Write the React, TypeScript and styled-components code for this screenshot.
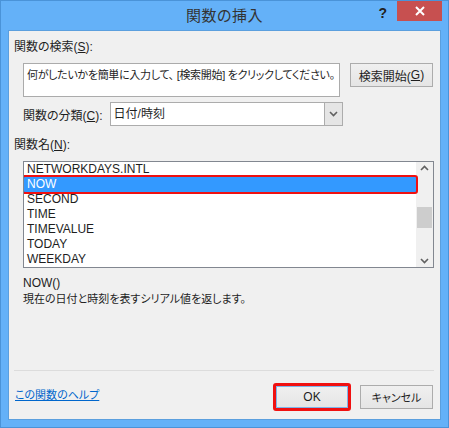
import styled, { createGlobalStyle } from "styled-components";

const GlobalStyle = createGlobalStyle`
    html, body {
        margin: 0;
        padding: 0;
        background: #ffffff;
    }
    body {
        font-family: "Liberation Sans", "Noto Sans CJK JP", sans-serif;
        font-feature-settings: "palt";
    }
`;

const Window = styled.div`
    width: 449px;
    height: 428px;
    box-sizing: border-box;
    background-color: #64b1f8;
    border: 1px solid #4a93d8;
    display: flex;
    flex-direction: column;
`;

const TitleBar = styled.div`
    height: 29px;
    display: grid;
    grid-template-columns: 1fr auto 1fr;
    align-items: start;
`;

const Title = styled.div`
    grid-column: 2;
    font-size: 15px;
    color: #333;
    line-height: 29px;
    letter-spacing: 0.5px;
`;

const Controls = styled.div`
    grid-column: 3;
    justify-self: end;
    display: flex;
    align-items: flex-start;
    margin-right: 6px;
`;

const HelpMark = styled.span`
    font-family: "Liberation Sans", sans-serif;
    font-weight: bold;
    font-size: 14px;
    color: #222;
    margin-top: 4px;
    margin-right: 10px;
`;

const CloseButton = styled.div`
    width: 45px;
    height: 20px;
    background-color: #c75050;
    display: flex;
    align-items: center;
    justify-content: center;
`;

const Client = styled.div`
    margin: 0 7px 7px 7px;
    flex: 1;
    background-color: #f0f0f0;
    border: 1px solid #5b9fde;
    display: flex;
    flex-direction: column;
    padding: 0 6px 0 5px;
    font-size: 12px;
    color: #1e1e1e;
`;

const Label = styled.div<{ $top: number; $indent?: boolean; $size?: number }>`
    margin-top: ${(p) => p.$top}px;
    margin-left: ${(p) => (p.$indent ? 9 : 0)}px;
    font-size: ${(p) => p.$size ?? 12}px;
    height: 14px;
    line-height: 14px;
    white-space: nowrap;
`;

const Key = styled.span`
    text-decoration: underline;
`;

const Indented = styled.div<{ $top: number }>`
    margin-left: 9px;
    margin-top: ${(p) => p.$top}px;
`;

const SearchRow = styled.div`
    display: flex;
    align-items: flex-start;
    gap: 10px;
`;

const SearchBox = styled.div`
    width: 317px;
    height: 34px;
    box-sizing: border-box;
    background: #fff;
    border: 1px solid #ababab;
    padding: 4px 3px;
    font-size: 11px;
    letter-spacing: -0.3px;
    line-height: 14px;
    white-space: nowrap;
    overflow: hidden;
`;

const Button = styled.div<{ $width: number; $focus?: boolean; $size?: number }>`
    width: ${(p) => p.$width}px;
    height: 24px;
    box-sizing: border-box;
    border: 1px solid ${(p) => (p.$focus ? "#3c7fb1" : "#acacac")};
    background: linear-gradient(#f0f0f0, #e5e5e5);
    font-size: ${(p) => p.$size ?? 12}px;
    display: flex;
    align-items: center;
    justify-content: center;
    white-space: nowrap;
    position: relative;
    box-shadow: ${(p) => (p.$focus ? "inset 0 0 0 1px #7eb4ea" : "none")};
`;

const CategoryRow = styled.div`
    display: flex;
    align-items: center;
    gap: 7px;
`;

const Select = styled.div`
    width: 233px;
    height: 24px;
    box-sizing: border-box;
    border: 1px solid #acacac;
    background: #fff;
    display: flex;
`;

const SelectValue = styled.div`
    flex: 1;
    padding-left: 3px;
    line-height: 22px;
    font-size: 12px;
`;

const SelectArrow = styled.div`
    width: 17px;
    border-left: 1px solid #acacac;
    background: #e5e5e5;
    display: flex;
    align-items: center;
    justify-content: center;
`;

const List = styled.div`
    width: 411px;
    height: 107px;
    box-sizing: border-box;
    border: 1px solid #828790;
    background: #fff;
    display: flex;
    overflow: hidden;
`;

const Items = styled.div`
    flex: 1;
`;

const Item = styled.div<{ $selected?: boolean }>`
    height: 15px;
    line-height: 15px;
    padding-left: 3px;
    font-size: 12px;
    color: ${(p) => (p.$selected ? "#fff" : "#1e1e1e")};
    background: ${(p) => (p.$selected ? "#3399ff" : "transparent")};
    position: relative;
`;

const Callout = styled.div<{ $width: number }>`
    position: absolute;
    inset: -${(p) => p.$width}px;
    border: ${(p) => p.$width}px solid #f01010;
    border-radius: 3px;
    pointer-events: none;
`;

const ScrollBar = styled.div`
    width: 17px;
    background: #f0f0f0;
    display: flex;
    flex-direction: column;
    align-items: center;
    justify-content: space-between;
    padding: 3px 0;
    box-sizing: border-box;
`;

const Track = styled.div`
    flex: 1;
    width: 100%;
    display: flex;
    flex-direction: column;
    align-items: center;
    padding-top: 36px;
`;

const Thumb = styled.div`
    width: 15px;
    height: 21px;
    background: #cdcdcd;
`;

const Footer = styled.div`
    margin-top: auto;
    border-top: 1px solid #dcdcdc;
    height: 49px;
    display: flex;
    align-items: flex-start;
    padding-top: 14px;
    box-sizing: border-box;
`;

const HelpLink = styled.a`
    color: #0066cc;
    text-decoration: underline;
    font-size: 11px;
    line-height: 14px;
    margin-top: 3px;
    margin-left: 1px;
    flex: 1;
`;

const ButtonGroup = styled.div`
    display: flex;
    gap: 11px;
    margin-right: 1px;
`;

const Chevron = ({ up }: { up?: boolean }) => (
    <svg width="9" height="6" viewBox="0 0 9 6">
        <path
            d={up ? "M1 5 L4.5 1.5 L8 5" : "M1 1 L4.5 4.5 L8 1"}
            fill="none"
            stroke="#606060"
            strokeWidth="1.6"
        />
    </svg>
);

const items = [
    "NETWORKDAYS.INTL",
    "NOW",
    "SECOND",
    "TIME",
    "TIMEVALUE",
    "TODAY",
    "WEEKDAY",
];

export default function App() {
    return (
        <>
            <GlobalStyle />
            <Window>
                <TitleBar>
                    <Title>関数の挿入</Title>
                    <Controls>
                        <HelpMark>?</HelpMark>
                        <CloseButton>
                            <svg width="10" height="10" viewBox="0 0 10 10">
                                <path
                                    d="M1 1 L9 9 M9 1 L1 9"
                                    stroke="#fff"
                                    strokeWidth="2"
                                />
                            </svg>
                        </CloseButton>
                    </Controls>
                </TitleBar>
                <Client>
                    <Label $top={9}>
                        関数の検索(<Key>S</Key>):
                    </Label>
                    <Indented $top={9}>
                        <SearchRow>
                            <SearchBox>
                                何がしたいかを簡単に入力して、 [検索開始] をクリックしてください。
                            </SearchBox>
                            <Button $width={83}>
                                検索開始(<Key>G</Key>)
                            </Button>
                        </SearchRow>
                    </Indented>
                    <Indented $top={5}>
                        <CategoryRow>
                            <span>
                                関数の分類(<Key>C</Key>):
                            </span>
                            <Select>
                                <SelectValue>日付/時刻</SelectValue>
                                <SelectArrow>
                                    <Chevron />
                                </SelectArrow>
                            </Select>
                        </CategoryRow>
                    </Indented>
                    <Label $top={12}>
                        関数名(<Key>N</Key>):
                    </Label>
                    <Indented $top={9}>
                        <List>
                            <Items>
                                {items.map((name) => (
                                    <Item key={name} $selected={name === "NOW"}>
                                        {name}
                                        {name === "NOW" && <Callout $width={2} />}
                                    </Item>
                                ))}
                            </Items>
                            <ScrollBar>
                                <Chevron up />
                                <Track>
                                    <Thumb />
                                </Track>
                                <Chevron />
                            </ScrollBar>
                        </List>
                    </Indented>
                    <Label $top={8} $indent>
                        NOW()
                    </Label>
                    <Label $top={2} $indent $size={11}>
                        現在の日付と時刻を表すシリアル値を返します。
                    </Label>
                    <Footer>
                        <HelpLink>この関数のヘルプ</HelpLink>
                        <ButtonGroup>
                            <Button $width={74} $focus>
                                OK
                                <Callout $width={3} />
                            </Button>
                            <Button $width={73} $size={11}>
                                キャンセル
                            </Button>
                        </ButtonGroup>
                    </Footer>
                </Client>
            </Window>
        </>
    );
}
